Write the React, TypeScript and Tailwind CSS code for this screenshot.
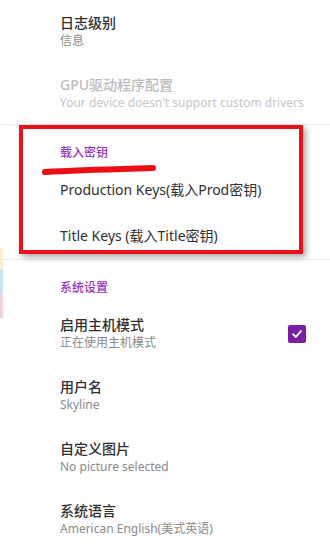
const font = { fontFamily: '"Noto Sans", "Noto Sans CJK SC", sans-serif' };

type Item = { title: string; summary?: string; disabled?: boolean; checked?: boolean };

function Pref({ title, summary, disabled, checked }: Item) {
  return (
    <div className={`flex items-center pl-[60px] pr-6 ${summary ? 'pt-[14px] pb-[13px]' : 'py-[14px]'}`}>
      <div className="flex-1 min-w-0">
        <div
          className={`text-[14px] leading-[18px] whitespace-nowrap ${summary ? 'font-medium' : ''} ${
            disabled ? 'text-[#bdbdbd]' : 'text-[#303030]'
          }`}
        >
          {title}
        </div>
        {summary && (
          <div
            className={`text-[12px] leading-[17px] whitespace-nowrap ${
              disabled ? 'text-[#c6c6c6]' : 'text-[#8a8a8a]'
            }`}
          >
            {summary}
          </div>
        )}
      </div>
      {checked && (
        <div className="w-[18px] h-[18px] rounded-[2px] bg-[#7b1fa2] flex items-center justify-center">
          <svg width="12" height="12" viewBox="0 0 12 12" fill="none">
            <path d="M2 6.2 L4.9 9 L10 3.2" stroke="white" strokeWidth="1.8" strokeLinecap="round" strokeLinejoin="round" />
          </svg>
        </div>
      )}
    </div>
  );
}

function Header({ label }: { label: string }) {
  return (
    <div className="pl-[60px] pt-[20px] pb-[6px] text-[12px] leading-[16px] font-medium text-[#9538c0]">{label}</div>
  );
}

export default function App() {
  return (
    <div className="relative w-[330px] h-[547px] bg-white overflow-hidden" style={font}>
      <Pref title="日志级别" summary="信息" />
      <Pref title="GPU驱动程序配置" summary="Your device doesn't support custom drivers" disabled />
      <div className="h-px bg-[#ebebeb]" />

      <Header label="载入密钥" />
      <Pref title="Production Keys(载入Prod密钥)" />
      <Pref title="Title Keys (载入Title密钥)" />
      <div className="h-px bg-[#ebebeb]" />

      <Header label="系统设置" />
      <Pref title="启用主机模式" summary="正在使用主机模式" checked />
      <Pref title="用户名" summary="Skyline" />
      <Pref title="自定义图片" summary="No picture selected" />
      <Pref title="系统语言" summary="American English(美式英语)" />

      {/* annotation overlay */}
      <div className="absolute left-[19px] top-[125px] w-[284px] h-[129px] border-[4px] border-[#e8121a] shadow-[3px_3px_6px_rgba(0,0,0,0.35)]" />
      <svg className="absolute left-0 top-0" width="330" height="547" viewBox="0 0 330 547" fill="none">
        <path d="M45 172 C80 170 120 169 153 168" stroke="#ea0f14" strokeWidth="6" strokeLinecap="round" />
      </svg>

      {/* left edge strips */}
      <div className="absolute left-0 top-[248px] w-[3px] flex flex-col">
        <div className="h-[22px] bg-[#fbeed3]" />
        <div className="h-[23px] bg-[#c6e3f2]" />
        <div className="h-[25px] bg-[#efd1e1]" />
      </div>
    </div>
  );
}
